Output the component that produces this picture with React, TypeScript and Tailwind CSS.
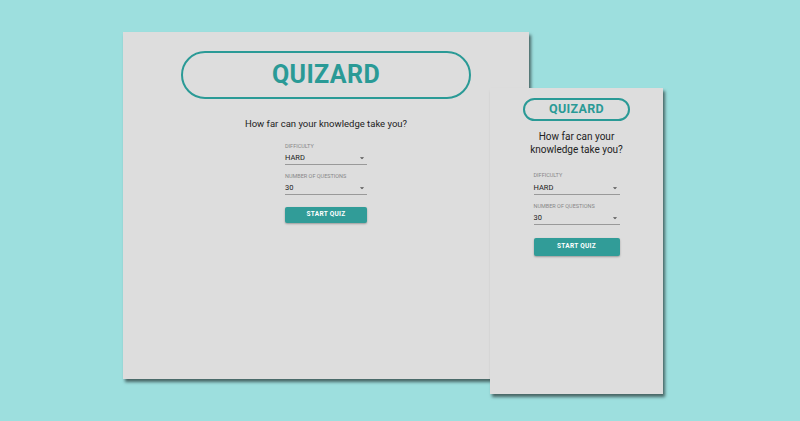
import React from 'react';

function Caret({ size }: { size: number }) {
  return (
    <svg width={size} height={size} viewBox="0 0 24 24" className="shrink-0 fill-[#555]">
      <path d="M7 10l5 5 5-5z" />
    </svg>
  );
}

export default function App() {
  return (
    <div className="relative w-[800px] h-[421px] overflow-hidden bg-[#9ddfde] font-['Roboto',sans-serif]">
      {/* large desktop window */}
      <div className="absolute left-[123px] top-[32px] w-[406px] h-[347px] bg-[#dddddd] shadow-[2px_3px_3px_rgba(0,0,0,0.55)] flex flex-col items-center">
        <div className="mt-[19px] w-[290px] h-[48px] rounded-full border-2 border-[#2a9a96] flex items-center justify-center">
          <span className="text-[25px] font-bold text-[#2a9a96] tracking-[0.4px]">QUIZARD</span>
        </div>
        <p className="mt-[18px] text-[9.5px] leading-[14px] text-[#222]">How far can your knowledge take you?</p>
        <div className="mt-[12px] w-[82px] flex flex-col">
          <span className="text-[5.5px] leading-[7px] text-[#888] uppercase">Difficulty</span>
          <div className="mt-[3px] flex items-center justify-between border-b border-[#999] pb-[1px]">
            <span className="text-[7.5px] leading-[10px] text-[#222]">HARD</span>
            <Caret size={10} />
          </div>
          <span className="mt-[8px] text-[5.5px] leading-[7px] text-[#888] uppercase">Number of questions</span>
          <div className="mt-[3px] flex items-center justify-between border-b border-[#999] pb-[1px]">
            <span className="text-[7.5px] leading-[10px] text-[#222]">30</span>
            <Caret size={10} />
          </div>
          <button className="mt-[12px] h-[16px] rounded-[2px] bg-[#319c98] shadow-[0_1px_2px_rgba(0,0,0,0.3)] text-white text-[6.5px] font-bold tracking-[0.3px]">
            START QUIZ
          </button>
        </div>
      </div>

      {/* small mobile window */}
      <div className="absolute left-[490px] top-[88px] w-[173px] h-[306px] bg-[#dddddd] shadow-[2px_3px_3px_rgba(0,0,0,0.55)] flex flex-col items-center">
        <div className="mt-[10px] w-[107px] h-[23px] rounded-full border-2 border-[#2a9a96] flex items-center justify-center">
          <span className="text-[12.5px] font-bold text-[#2a9a96] tracking-[0.3px]">QUIZARD</span>
        </div>
        <p className="mt-[9px] w-[100px] text-center text-[10px] leading-[13px] text-[#222]">How far can your knowledge take you?</p>
        <div className="mt-[16px] w-[86px] flex flex-col">
          <span className="text-[5.5px] leading-[7px] text-[#888] uppercase">Difficulty</span>
          <div className="mt-[4px] flex items-center justify-between border-b border-[#999] pb-[1px]">
            <span className="text-[7.5px] leading-[10px] text-[#222]">HARD</span>
            <Caret size={10} />
          </div>
          <span className="mt-[8px] text-[5.5px] leading-[7px] text-[#888] uppercase">Number of questions</span>
          <div className="mt-[3px] flex items-center justify-between border-b border-[#999] pb-[1px]">
            <span className="text-[7.5px] leading-[10px] text-[#222]">30</span>
            <Caret size={10} />
          </div>
          <button className="mt-[13px] h-[18px] rounded-[2px] bg-[#319c98] shadow-[0_1px_2px_rgba(0,0,0,0.3)] text-white text-[6.5px] font-bold tracking-[0.3px]">
            START QUIZ
          </button>
        </div>
      </div>
    </div>
  );
}
